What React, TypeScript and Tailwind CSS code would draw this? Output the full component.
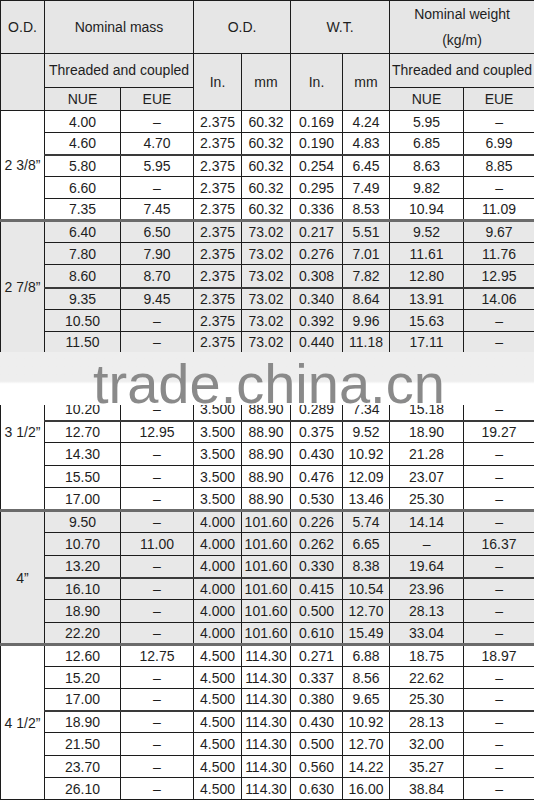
import React from "react";

interface Group {
  label: string;
  shaded: boolean;
  rows: string[][];
  heavy?: number[]; // rows with a heavier top rule
  tall?: number[]; // rows that are one pixel taller
}

const D = "–";

const groups: Group[] = [
  {
    label: "2 3/8”",
    shaded: false,
    heavy: [2],
    rows: [
      ["4.00", D, "2.375", "60.32", "0.169", "4.24", "5.95", D],
      ["4.60", "4.70", "2.375", "60.32", "0.190", "4.83", "6.85", "6.99"],
      ["5.80", "5.95", "2.375", "60.32", "0.254", "6.45", "8.63", "8.85"],
      ["6.60", D, "2.375", "60.32", "0.295", "7.49", "9.82", D],
      ["7.35", "7.45", "2.375", "60.32", "0.336", "8.53", "10.94", "11.09"],
    ],
  },
  {
    label: "2 7/8”",
    shaded: true,
    heavy: [3],
    tall: [2],
    rows: [
      ["6.40", "6.50", "2.375", "73.02", "0.217", "5.51", "9.52", "9.67"],
      ["7.80", "7.90", "2.375", "73.02", "0.276", "7.01", "11.61", "11.76"],
      ["8.60", "8.70", "2.375", "73.02", "0.308", "7.82", "12.80", "12.95"],
      ["9.35", "9.45", "2.375", "73.02", "0.340", "8.64", "13.91", "14.06"],
      ["10.50", D, "2.375", "73.02", "0.392", "9.96", "15.63", D],
      ["11.50", D, "2.375", "73.02", "0.440", "11.18", "17.11", D],
    ],
  },
  {
    label: "3 1/2”",
    shaded: false,
    heavy: [3],
    tall: [1, 4, 6],
    rows: [
      ["7.70", D, "3.500", "88.90", "0.216", "5.49", "11.29", D],
      ["9.20", "9.30", "3.500", "88.90", "0.254", "6.45", "13.69", "13.84"],
      ["10.20", D, "3.500", "88.90", "0.289", "7.34", "15.18", D],
      ["12.70", "12.95", "3.500", "88.90", "0.375", "9.52", "18.90", "19.27"],
      ["14.30", D, "3.500", "88.90", "0.430", "10.92", "21.28", D],
      ["15.50", D, "3.500", "88.90", "0.476", "12.09", "23.07", D],
      ["17.00", D, "3.500", "88.90", "0.530", "13.46", "25.30", D],
    ],
  },
  {
    label: "4”",
    shaded: true,
    heavy: [3],
    tall: [1, 4],
    rows: [
      ["9.50", D, "4.000", "101.60", "0.226", "5.74", "14.14", D],
      ["10.70", "11.00", "4.000", "101.60", "0.262", "6.65", D, "16.37"],
      ["13.20", D, "4.000", "101.60", "0.330", "8.38", "19.64", D],
      ["16.10", D, "4.000", "101.60", "0.415", "10.54", "23.96", D],
      ["18.90", D, "4.000", "101.60", "0.500", "12.70", "28.13", D],
      ["22.20", D, "4.000", "101.60", "0.610", "15.49", "33.04", D],
    ],
  },
  {
    label: "4 1/2”",
    shaded: false,
    heavy: [3],
    tall: [4],
    rows: [
      ["12.60", "12.75", "4.500", "114.30", "0.271", "6.88", "18.75", "18.97"],
      ["15.20", D, "4.500", "114.30", "0.337", "8.56", "22.62", D],
      ["17.00", D, "4.500", "114.30", "0.380", "9.65", "25.30", D],
      ["18.90", D, "4.500", "114.30", "0.430", "10.92", "28.13", D],
      ["21.50", D, "4.500", "114.30", "0.500", "12.70", "32.00", D],
      ["23.70", D, "4.500", "114.30", "0.560", "14.22", "35.27", D],
      ["26.10", D, "4.500", "114.30", "0.630", "16.00", "38.84", D],
    ],
  },
];

const th = "border border-[#1c1c1c] bg-[#e6e6e6] font-normal text-center align-middle p-0";
const td = "border border-[#1c1c1c] text-center align-middle p-0 leading-[18px]";

const App = () => {
  return (
    <div className="relative w-[534px] h-[800px] overflow-hidden bg-white text-[#1e1e1e] font-['Liberation_Sans',Arial,sans-serif] text-[14px]">
      <table className="w-[534px] table-fixed border-collapse">
        <colgroup>
          <col className="w-[44px]" />
          <col className="w-[76px]" />
          <col className="w-[73px]" />
          <col className="w-[48px]" />
          <col className="w-[49px]" />
          <col className="w-[52px]" />
          <col className="w-[47px]" />
          <col className="w-[74px]" />
          <col className="w-[71px]" />
        </colgroup>
        <thead>
          <tr className="h-[52px]">
            <th className={th}>O.D.</th>
            <th className={th} colSpan={2}>Nominal mass</th>
            <th className={th} colSpan={2}>O.D.</th>
            <th className={th} colSpan={2}>W.T.</th>
            <th className={`${th} leading-[26px]`} colSpan={2}>
              Nominal weight
              <br />
              (kg/m)
            </th>
          </tr>
          <tr className="h-[34px]">
            <th className={th} rowSpan={2}></th>
            <th className={`${th} whitespace-nowrap`} colSpan={2}>Threaded and coupled</th>
            <th className={th} rowSpan={2}>In.</th>
            <th className={th} rowSpan={2}>mm</th>
            <th className={th} rowSpan={2}>In.</th>
            <th className={th} rowSpan={2}>mm</th>
            <th className={`${th} whitespace-nowrap`} colSpan={2}>Threaded and coupled</th>
          </tr>
          <tr className="h-[23px]">
            <th className={th}>NUE</th>
            <th className={th}>EUE</th>
            <th className={th}>NUE</th>
            <th className={th}>EUE</th>
          </tr>
        </thead>
        <tbody>
          {groups.map((g, gi) =>
            g.rows.map((row, ri) => {
              const bg = g.shaded ? "bg-[#e8e8e8]" : "bg-white";
              const h = g.tall?.includes(ri) ? "h-[23px]" : "h-[22px]";
              const top =
                ri === 0 && gi > 0
                  ? "border-t-[3px] border-t-[#6b6b6b]"
                  : g.heavy?.includes(ri)
                  ? "border-t-2 border-t-[#3a3a3a]"
                  : "";
              return (
                <tr key={`${gi}-${ri}`}>
                  {ri === 0 && (
                    <td className={`${td} ${bg} ${gi > 0 ? "border-t-[3px] border-t-[#6b6b6b]" : ""}`} rowSpan={g.rows.length}>
                      {g.label}
                    </td>
                  )}
                  {row.map((v, ci) => (
                    <td key={ci} className={`${td} ${h} ${bg} ${top}`}>
                      {v}
                    </td>
                  ))}
                </tr>
              );
            })
          )}
        </tbody>
      </table>

      {/* watermark band */}
      <div className="absolute left-0 top-[352px] w-[534px] h-[53px] bg-gradient-to-b from-[#eeeeee] from-55% to-white to-60%"></div>
      <div className="absolute left-[93px] top-[356px] text-[56px] leading-none text-[#8a8a8a] font-['Liberation_Sans',Arial,sans-serif] whitespace-nowrap">
        trade.china.cn
      </div>
    </div>
  );
};

export default App;
